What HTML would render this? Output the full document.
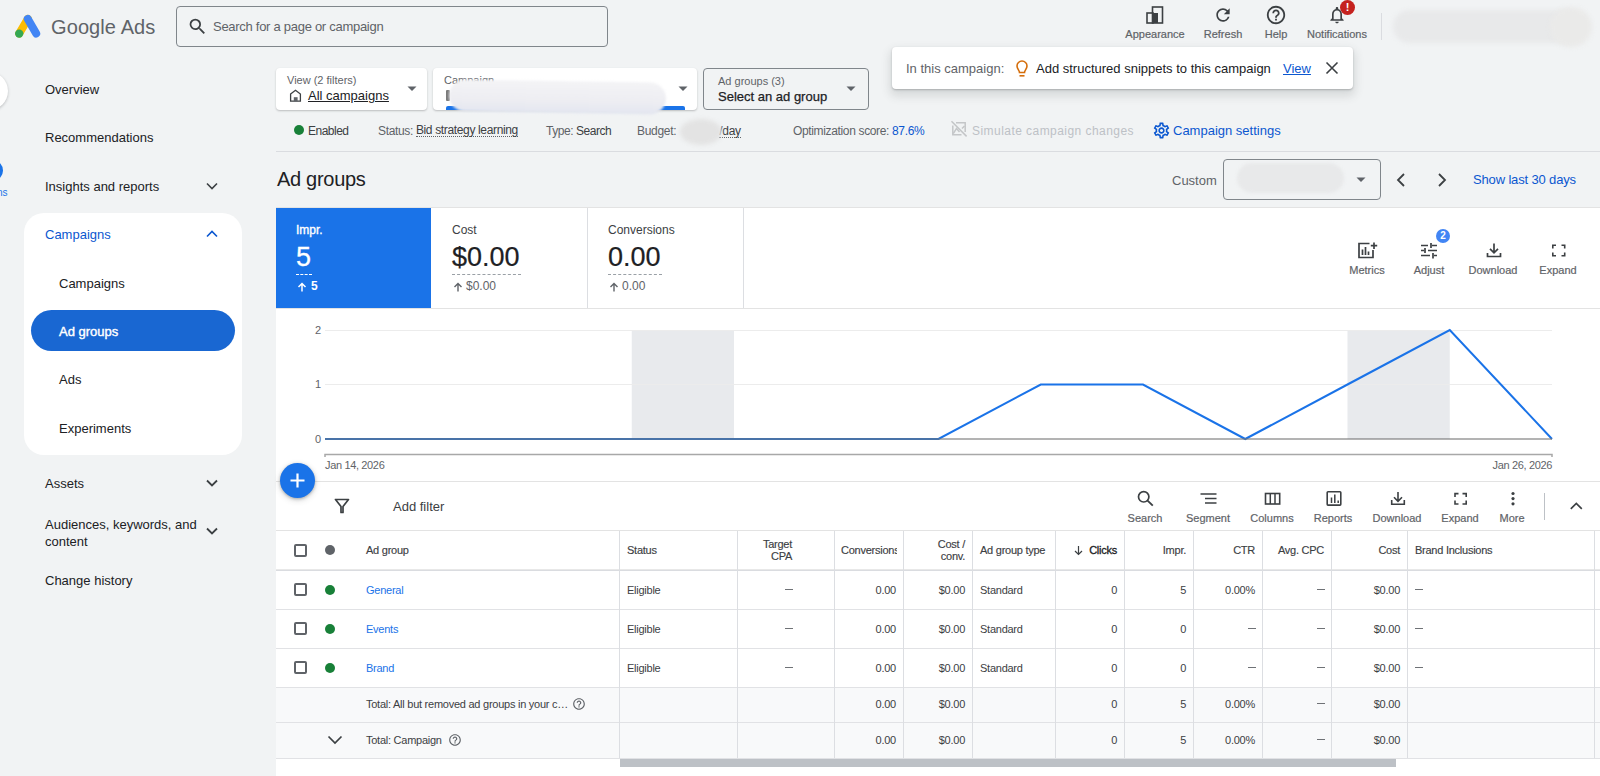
<!DOCTYPE html>
<html><head><meta charset="utf-8">
<style>
*{box-sizing:border-box;margin:0;padding:0}
html,body{width:1600px;height:776px;overflow:hidden;background:#f1f3f4;font-family:"Liberation Sans",sans-serif;color:#202124}
.a{position:absolute;white-space:nowrap}
.ic{position:absolute}
.lbl{position:absolute;font-size:11px;color:#5f6368;text-align:center;width:80px;margin-left:-40px;-webkit-text-stroke:0.2px #5f6368}
.nav{position:absolute;font-size:13px;color:#202124;left:45px}
.sub{left:59px}
.chev{position:absolute}
.hl{position:absolute;height:1px;background:#dadce0}
.vl{position:absolute;width:1px;background:#dcdee2}
</style></head><body>
<!-- Top bar -->
<svg class="ic" style="left:10px;top:10px" width="40" height="32" viewBox="10 10 40 32">
  <path d="M19.2 33.6 L27.8 18.9" stroke="#fbbc04" stroke-width="8" stroke-linecap="round"/>
  <path d="M27.8 18.9 L36.2 33.6" stroke="#4285f4" stroke-width="8" stroke-linecap="round"/>
  <circle cx="19.2" cy="33.6" r="4.2" fill="#34a853"/>
</svg>
<div class="a" style="left:51px;top:16px;font-size:20px;color:#5f6368;letter-spacing:0.1px">Google Ads</div>
<div class="a" style="left:176px;top:6px;width:432px;height:41px;border:1px solid #80868b;border-radius:4px"></div>
<svg class="ic" style="left:187px;top:16px" width="21" height="21" viewBox="0 0 24 24"><path fill="#3c4043" d="M15.5 14h-.79l-.28-.27A6.47 6.47 0 0 0 16 9.5 6.5 6.5 0 1 0 9.5 16c1.61 0 3.09-.59 4.23-1.57l.27.28v.79l5 4.99L20.49 19l-4.99-5zm-6 0C7.01 14 5 11.99 5 9.5S7.01 5 9.5 5 14 7.01 14 9.5 11.99 14 9.5 14z"/></svg>
<div class="a" style="left:213px;top:19px;font-size:13px;color:#5f6368;letter-spacing:-0.28px">Search for a page or campaign</div>


<!-- top right icons -->
<svg class="ic" style="left:1145px;top:5px" width="20" height="20" viewBox="0 0 20 20"><rect x="2" y="8" width="6" height="10" fill="none" stroke="#3c4043" stroke-width="1.6"/><rect x="7.5" y="2" width="10" height="16" fill="none" stroke="#3c4043" stroke-width="1.6"/><rect x="8" y="8" width="5" height="10" fill="#3c4043"/></svg>
<div class="lbl" style="left:1155px;top:28px">Appearance</div>
<svg class="ic" style="left:1213px;top:5px" width="20" height="20" viewBox="0 0 24 24"><path fill="#3c4043" d="M17.65 6.35A7.958 7.958 0 0 0 12 4c-4.42 0-7.99 3.58-7.99 8s3.57 8 7.99 8c3.73 0 6.84-2.55 7.73-6h-2.08A5.99 5.99 0 0 1 12 18c-3.31 0-6-2.69-6-6s2.69-6 6-6c1.66 0 3.14.69 4.22 1.78L13 11h7V4l-2.35 2.35z"/></svg>
<div class="lbl" style="left:1223px;top:28px">Refresh</div>
<svg class="ic" style="left:1265px;top:4px" width="22" height="22" viewBox="0 0 24 24"><path fill="#3c4043" d="M11 18h2v-2h-2v2zm1-16C6.48 2 2 6.48 2 12s4.48 10 10 10 10-4.48 10-10S17.52 2 12 2zm0 18c-4.41 0-8-3.59-8-8s3.59-8 8-8 8 3.59 8 8-3.59 8-8 8zm0-14c-2.21 0-4 1.79-4 4h2c0-1.1.9-2 2-2s2 .9 2 2c0 2-3 1.75-3 5h2c0-2.25 3-2.5 3-5 0-2.21-1.79-4-4-4z"/></svg>
<div class="lbl" style="left:1276px;top:28px">Help</div>
<svg class="ic" style="left:1327px;top:5px" width="20" height="20" viewBox="0 0 24 24"><path fill="#3c4043" d="M12 22c1.1 0 2-.9 2-2h-4c0 1.1.89 2 2 2zm6-6v-5c0-3.07-1.64-5.64-4.5-6.32V4c0-.83-.67-1.5-1.5-1.5s-1.5.67-1.5 1.5v.68C7.63 5.36 6 7.92 6 11v5l-2 2v1h16v-1l-2-2zm-2 1H8v-6c0-2.48 1.51-4.5 4-4.5s4 2.02 4 4.5v6z"/></svg>
<div class="a" style="left:1340px;top:0px;width:15px;height:15px;border-radius:50%;background:#c5221f;color:#fff;font-size:11px;font-weight:bold;text-align:center;line-height:15px">!</div>
<div class="lbl" style="left:1337px;top:28px">Notifications</div>
<div class="a" style="left:1381px;top:13px;width:1px;height:27px;background:#dadce0"></div>
<div class="a" style="left:1393px;top:10px;width:185px;height:33px;border-radius:17px;background:#e8e9ea;filter:blur(2px)"></div><div class="a" style="left:1550px;top:7px;width:42px;height:40px;border-radius:50%;background:#eaeae9;filter:blur(2px)"></div>

<!-- left rail partial -->
<div class="a" style="left:-30px;top:72px;width:38px;height:38px;border-radius:50%;background:#fff;box-shadow:0 1px 3px rgba(60,64,67,.3)"></div>
<div class="a" style="left:-14px;top:161px;width:17px;height:19px;border-radius:50%;background:#1a73e8"></div>
<div class="a" style="left:-3px;top:187px;font-size:10px;color:#1a73e8">ns</div>

<!-- nav -->
<div class="nav a" style="top:82px">Overview</div>
<div class="nav a" style="top:130px">Recommendations</div>
<div class="nav a" style="top:179px">Insights and reports</div>
<svg class="ic" style="left:205px;top:179px" width="14" height="14" viewBox="0 0 14 14"><path d="M2 4.5 L7 9.5 L12 4.5" fill="none" stroke="#3c4043" stroke-width="1.6"/></svg>
<div class="a" style="left:24px;top:213px;width:218px;height:242px;border-radius:20px;background:#fff"></div>
<div class="nav a" style="top:227px;color:#0b57d0">Campaigns</div>
<svg class="ic" style="left:205px;top:227px" width="14" height="14" viewBox="0 0 14 14"><path d="M2 9.5 L7 4.5 L12 9.5" fill="none" stroke="#0b57d0" stroke-width="1.6"/></svg>
<div class="nav sub a" style="top:276px">Campaigns</div>
<div class="a" style="left:31px;top:310px;width:204px;height:41px;border-radius:21px;background:#1967d2"></div>
<div class="nav sub a" style="top:324px;color:#fff;-webkit-text-stroke:0.4px #fff">Ad groups</div>
<div class="nav sub a" style="top:372px">Ads</div>
<div class="nav sub a" style="top:421px">Experiments</div>
<div class="nav a" style="top:476px">Assets</div>
<svg class="ic" style="left:205px;top:476px" width="14" height="14" viewBox="0 0 14 14"><path d="M2 4.5 L7 9.5 L12 4.5" fill="none" stroke="#3c4043" stroke-width="1.8"/></svg>
<div class="nav a" style="top:516px;line-height:17px">Audiences, keywords, and<br>content</div>
<svg class="ic" style="left:205px;top:524px" width="14" height="14" viewBox="0 0 14 14"><path d="M2 4.5 L7 9.5 L12 4.5" fill="none" stroke="#3c4043" stroke-width="1.8"/></svg>
<div class="nav a" style="top:573px">Change history</div>

<!-- dropdowns -->
<div class="a" style="left:276px;top:68px;width:151px;height:42px;border-radius:4px;background:#fff;box-shadow:0 1px 2px rgba(60,64,67,.3)"></div>
<div class="a" style="left:287px;top:74px;font-size:11px;color:#5f6368">View (2 filters)</div>
<svg class="ic" style="left:286px;top:86px" width="18" height="18" viewBox="286 86 18 18"><path d="M290.6 94 L295.5 90.2 L300.4 94 V101.2 H290.6 Z" fill="none" stroke="#3c4043" stroke-width="1.3" stroke-linejoin="miter"/><rect x="293.8" y="97.2" width="3.8" height="4" fill="#5f6368"/></svg>
<div class="a" style="left:308px;top:88px;font-size:13px;color:#202124;text-decoration:underline">All campaigns</div>
<svg class="ic" style="left:407px;top:86px" width="10" height="6" viewBox="0 0 10 6"><path d="M0.5 0.5 H9.5 L5 5 Z" fill="#5f6368"/></svg>

<div class="a" style="left:433px;top:68px;width:264px;height:42px;border-radius:4px;background:#fff;box-shadow:0 1px 2px rgba(60,64,67,.3)"></div>
<div class="a" style="left:444px;top:74px;font-size:11px;color:#5f6368">Campaign</div>
<div class="a" style="left:446px;top:90px;width:4px;height:11px;background:#7a7a7a;border-radius:1px"></div>
<div class="a" style="left:446px;top:106px;width:239px;height:4px;background:#1a73e8;border-radius:2px 2px 0 0"></div>
<div class="a" style="left:449px;top:81px;width:217px;height:32px;border-radius:16px;background:linear-gradient(#f4f4f6,#ededf2 65%,#e3e6f0);filter:blur(1px);transform:rotate(0.9deg)"></div>
<svg class="ic" style="left:678px;top:86px" width="10" height="6" viewBox="0 0 10 6"><path d="M0.5 0.5 H9.5 L5 5 Z" fill="#5f6368"/></svg>

<div class="a" style="left:703px;top:68px;width:166px;height:42px;border-radius:4px;border:1px solid #80868b"></div>
<div class="a" style="left:718px;top:75px;font-size:11px;color:#5f6368">Ad groups (3)</div>
<div class="a" style="left:718px;top:89px;font-size:13px;color:#202124;-webkit-text-stroke:0.25px #202124;letter-spacing:0px">Select an ad group</div>
<svg class="ic" style="left:846px;top:86px" width="10" height="6" viewBox="0 0 10 6"><path d="M0.5 0.5 H9.5 L5 5 Z" fill="#5f6368"/></svg>

<!-- notification popup -->
<div class="a" style="left:892px;top:47px;width:461px;height:42px;border-radius:4px;background:#fff;box-shadow:0 1px 2px rgba(60,64,67,.3),0 5px 10px 2px rgba(60,64,67,.15)"></div>
<div class="a" style="left:906px;top:61px;font-size:13px;color:#5f6368">In this campaign:</div>
<svg class="ic" style="left:1014px;top:59px" width="16" height="20" viewBox="0 0 16 20"><path d="M5.5 13.5 C5.5 11.5 3 10 3 7 A5 5 0 0 1 13 7 C13 10 10.5 11.5 10.5 13.5 Z" fill="none" stroke="#d56e0c" stroke-width="1.6"/><rect x="5.5" y="16" width="5" height="1.6" fill="#d56e0c"/></svg>
<div class="a" style="left:1036px;top:61px;font-size:13px;color:#202124">Add structured snippets to this campaign</div>
<div class="a" style="left:1283px;top:61px;font-size:13px;color:#0b57d0;text-decoration:underline">View</div>
<svg class="ic" style="left:1325px;top:61px" width="14" height="14" viewBox="0 0 14 14"><path d="M1.5 1.5 L12.5 12.5 M12.5 1.5 L1.5 12.5" stroke="#3c4043" stroke-width="1.6"/></svg>

<!-- status row -->
<div class="a" style="left:294px;top:125px;width:10px;height:10px;border-radius:50%;background:#188038"></div>
<div class="a" style="left:308px;top:124px;font-size:12px;color:#3c4043;letter-spacing:-0.5px">Enabled</div>
<div class="a" style="left:378px;top:124px;font-size:12px;color:#5f6368;letter-spacing:-0.35px">Status: <span style="color:#3c4043;display:inline-block;line-height:12px;position:relative;top:-1px;border-bottom:1px dotted #5f6368">Bid strategy learning</span></div>
<div class="a" style="left:546px;top:124px;font-size:12px;color:#5f6368;letter-spacing:-0.45px">Type: <span style="color:#3c4043">Search</span></div>
<div class="a" style="left:637px;top:124px;font-size:12px;color:#5f6368;letter-spacing:-0.3px">Budget: <span style="display:inline-block;width:40px"></span><span style="color:#3c4043;display:inline-block;line-height:12px;position:relative;top:0px;border-bottom:1px dotted #5f6368">/day</span></div>
<div class="a" style="left:680px;top:119px;width:42px;height:26px;border-radius:50%;background:#e3e3e3;filter:blur(2px)"></div>
<div class="a" style="left:793px;top:124px;font-size:12px;color:#5f6368;letter-spacing:-0.35px">Optimization score: <span style="color:#0b57d0">87.6%</span></div>
<svg class="ic" style="left:945px;top:115px" width="27" height="27" viewBox="945 115 27 27"><path d="M956 122.8 H965.2 V132 M952.8 125.5 V134.8 H961.5" fill="none" stroke="#c4c6c8" stroke-width="1.5"/><path d="M951.5 121.3 L966.6 136.4" stroke="#c4c6c8" stroke-width="1.5"/><path d="M953.3 133.5 L956.5 128.5 L959.5 132 M962 128.6 L964.5 126" fill="none" stroke="#c4c6c8" stroke-width="1.4"/></svg>
<div class="a" style="left:972px;top:124px;font-size:12px;color:#bdc1c6;letter-spacing:0.45px">Simulate campaign changes</div>
<svg class="ic" style="left:1152px;top:121px" width="19" height="19" viewBox="0 0 24 24"><path fill="#0b57d0" d="M19.43 12.98c.04-.32.07-.64.07-.98 0-.34-.03-.66-.07-.98l2.11-1.65c.19-.15.24-.42.12-.64l-2-3.46a.5.5 0 0 0-.61-.22l-2.49 1c-.52-.4-1.08-.73-1.69-.98l-.38-2.65A.488.488 0 0 0 14 2h-4c-.25 0-.46.18-.49.42l-.38 2.65c-.61.25-1.17.59-1.69.98l-2.49-1a.566.566 0 0 0-.18-.03c-.17 0-.34.09-.43.25l-2 3.46c-.13.22-.07.49.12.64l2.11 1.65c-.04.32-.07.65-.07.98 0 .33.03.66.07.98l-2.11 1.65c-.19.15-.24.42-.12.64l2 3.46a.5.5 0 0 0 .61.22l2.49-1c.52.4 1.080.73 1.69.98l.38 2.65c.03.24.24.42.49.42h4c.25 0 .46-.18.49-.42l.38-2.65c.61-.25 1.17-.59 1.69-.98l2.49 1c.06.02.12.03.18.03.17 0 .34-.09.43-.25l2-3.46c.12-.22.07-.49-.12-.64l-2.11-1.65zm-1.98-1.71c.04.31.05.52.05.73 0 .21-.02.43-.05.73l-.14 1.13.89.7 1.08.84-.7 1.21-1.27-.51-1.04-.42-.9.68c-.43.32-.84.56-1.25.73l-1.06.43-.16 1.13-.2 1.35h-1.4l-.19-1.35-.16-1.13-1.06-.43c-.43-.18-.83-.41-1.23-.71l-.91-.7-1.06.43-1.27.51-.7-1.21 1.08-.84.89-.7-.14-1.13c-.03-.31-.05-.54-.05-.74s.02-.43.05-.73l.14-1.13-.89-.7-1.08-.84.7-1.21 1.27.51 1.04.42.9-.68c.43-.32.84-.56 1.25-.73l1.06-.43.16-1.130.2-1.35h1.39l.19 1.35.16 1.13 1.06.43c.43.18.83.41 1.23.71l.91.7 1.06-.43 1.27-.51.7 1.21-1.07.85-.89.7.14 1.13zM12 8c-2.21 0-4 1.79-4 4s1.79 4 4 4 4-1.79 4-4-1.79-4-4-4zm0 6c-1.1 0-2-.9-2-2s.9-2 2-2 2 .9 2 2-.9 2-2 2z"/></svg>
<div class="a" style="left:1173px;top:123px;font-size:13px;color:#0b57d0">Campaign settings</div>
<div class="hl" style="left:276px;top:151px;width:1324px"></div>

<!-- title row -->
<div class="a" style="left:277px;top:168px;font-size:20px;color:#202124;letter-spacing:-0.3px">Ad groups</div>
<div class="a" style="left:1172px;top:173px;font-size:13px;color:#5f6368">Custom</div>
<div class="a" style="left:1223px;top:159px;width:158px;height:41px;border-radius:4px;border:1px solid #80868b"></div>
<div class="a" style="left:1237px;top:163px;width:107px;height:30px;border-radius:15px;background:#e8e9ea;filter:blur(1.5px)"></div>
<svg class="ic" style="left:1356px;top:177px" width="10" height="6" viewBox="0 0 10 6"><path d="M0.5 0.5 H9.5 L5 5 Z" fill="#5f6368"/></svg>
<svg class="ic" style="left:1394px;top:172px" width="14" height="16" viewBox="0 0 14 16"><path d="M10 2 L4 8 L10 14" fill="none" stroke="#3c4043" stroke-width="1.8"/></svg>
<svg class="ic" style="left:1435px;top:172px" width="14" height="16" viewBox="0 0 14 16"><path d="M4 2 L10 8 L4 14" fill="none" stroke="#3c4043" stroke-width="1.8"/></svg>
<div class="a" style="left:1473px;top:172px;font-size:13px;color:#0b57d0;letter-spacing:-0.15px">Show last 30 days</div>

<!-- scorecards panel -->
<div class="a" style="left:276px;top:207px;width:1324px;height:569px;background:#fff"></div>
<div class="hl" style="left:276px;top:207px;width:1324px;background:#e3e3e3"></div>
<div class="a" style="left:276px;top:208px;width:155px;height:100px;background:#1a73e8"></div>
<div class="vl" style="left:587px;top:208px;height:100px"></div>
<div class="vl" style="left:743px;top:208px;height:100px"></div>
<div class="hl" style="left:276px;top:308px;width:1324px;background:#e3e3e3"></div>
<div class="a" style="left:296px;top:223px;font-size:12px;color:#fff;-webkit-text-stroke:0.35px #fff">Impr.</div>
<div class="a" style="left:296px;top:242px;font-size:27px;color:#fff;-webkit-text-stroke:0.3px #fff">5</div>
<div class="a" style="left:296px;top:274px;width:16px;border-top:1px dashed #fff"></div>
<svg class="ic" style="left:297px;top:282px" width="10" height="10" viewBox="0 0 10 10"><path d="M5 9.5 V1.5 M1.5 5 L5 1.5 L8.5 5" fill="none" stroke="#fff" stroke-width="1.5"/></svg>
<div class="a" style="left:311px;top:279px;font-size:12px;color:#fff;font-weight:bold">5</div>

<div class="a" style="left:452px;top:223px;font-size:12px;color:#3c4043">Cost</div>
<div class="a" style="left:452px;top:242px;font-size:27px;color:#202124;-webkit-text-stroke:0.2px #202124">$0.00</div>
<div class="a" style="left:452px;top:274px;width:69px;border-top:1px dashed #9aa0a6"></div>
<svg class="ic" style="left:453px;top:282px" width="10" height="10" viewBox="0 0 10 10"><path d="M5 9.5 V1.5 M1.5 5 L5 1.5 L8.5 5" fill="none" stroke="#5f6368" stroke-width="1.4"/></svg>
<div class="a" style="left:466px;top:279px;font-size:12px;color:#5f6368">$0.00</div>

<div class="a" style="left:608px;top:223px;font-size:12px;color:#3c4043">Conversions</div>
<div class="a" style="left:608px;top:242px;font-size:27px;color:#202124;-webkit-text-stroke:0.2px #202124">0.00</div>
<div class="a" style="left:608px;top:274px;width:54px;border-top:1px dashed #9aa0a6"></div>
<svg class="ic" style="left:609px;top:282px" width="10" height="10" viewBox="0 0 10 10"><path d="M5 9.5 V1.5 M1.5 5 L5 1.5 L8.5 5" fill="none" stroke="#5f6368" stroke-width="1.4"/></svg>
<div class="a" style="left:622px;top:279px;font-size:12px;color:#5f6368">0.00</div>

<!-- chart tools -->
<svg class="ic" style="left:1357px;top:242px" width="21" height="17" viewBox="0 0 21 17"><path d="M12.5 1.5 H2 V15.5 H16 V8" fill="none" stroke="#3c4043" stroke-width="1.7"/><path d="M5.5 13 V7.5 M8.5 13 V5 M11.5 13 V9.5" stroke="#3c4043" stroke-width="1.7"/><path d="M17 0.5 V7 M13.8 3.7 H20.2" stroke="#3c4043" stroke-width="1.7"/></svg>
<div class="lbl" style="left:1367px;top:264px">Metrics</div>
<svg class="ic" style="left:1420px;top:242px" width="18" height="17" viewBox="0 0 18 17"><path d="M1 3.5 H8 M12 3.5 H17 M1 8.5 H4 M8 8.5 H17 M1 13.5 H10 M14 13.5 H17" stroke="#3c4043" stroke-width="1.7"/><path d="M11 1 V6 M5 6 V11 M13 11 V16.5" stroke="#3c4043" stroke-width="1.7"/></svg>
<div class="a" style="left:1436px;top:229px;width:14px;height:14px;border-radius:50%;background:#4285f4;color:#fff;font-size:10px;font-weight:bold;text-align:center;line-height:14px">2</div>
<div class="lbl" style="left:1429px;top:264px">Adjust</div>
<svg class="ic" style="left:1486px;top:243px" width="16" height="15" viewBox="0 0 16 15"><path d="M8 0.5 V9.5 M4 5.8 L8 9.8 L12 5.8" fill="none" stroke="#3c4043" stroke-width="1.7"/><path d="M1.5 10 V13.5 H14.5 V10" fill="none" stroke="#3c4043" stroke-width="1.7"/></svg>
<div class="lbl" style="left:1493px;top:264px">Download</div>
<svg class="ic" style="left:1548px;top:240px" width="22" height="20" viewBox="1548 240 22 20"><path d="M1552.8 248.5 V245.3 H1556 M1561.5 245.3 H1564.7 V248.5 M1564.7 252.5 V255.7 H1561.5 M1556 255.7 H1552.8 V252.5" fill="none" stroke="#3c4043" stroke-width="1.6"/></svg>
<div class="lbl" style="left:1558px;top:264px">Expand</div>

<!-- chart -->
<svg class="ic" style="left:0;top:0" width="1600" height="776" viewBox="0 0 1600 776">
  <rect x="631.75" y="330" width="102.25" height="109" fill="#e8eaed"/>
  <rect x="1347.5" y="330" width="102.25" height="109" fill="#e8eaed"/>
  <path d="M325 330.5 H1552 M325 384.5 H1552" stroke="#ececec" stroke-width="1"/>
  
  <path d="M325 457 V454.5 H1552 V457" fill="none" stroke="#a8a8a8" stroke-width="1.5"/>
  <polyline points="325.00,439 427.25,439 529.50,439 631.75,439 734.00,439 836.25,439 938.50,439 1040.75,384.5 1143.00,384.5 1245.25,439 1347.50,384.5 1449.75,330 1552.00,439" fill="none" stroke="#1a73e8" stroke-width="2" stroke-linejoin="miter"/>
  <path d="M325 439 H1552" stroke="rgba(114,114,114,0.54)" stroke-width="2"/>
</svg>
<div class="a" style="left:300px;top:324px;width:21px;text-align:right;font-size:11px;color:#5f6368">2</div>
<div class="a" style="left:300px;top:378px;width:21px;text-align:right;font-size:11px;color:#5f6368">1</div>
<div class="a" style="left:300px;top:433px;width:21px;text-align:right;font-size:11px;color:#5f6368">0</div>
<div class="a" style="left:325px;top:459px;font-size:11px;color:#5f6368;letter-spacing:-0.35px">Jan 14, 2026</div>
<div class="a" style="left:1452px;top:459px;width:100px;text-align:right;font-size:11px;color:#5f6368;letter-spacing:-0.35px">Jan 26, 2026</div>
<div class="hl" style="left:276px;top:481px;width:1324px;background:#e3e3e3"></div>

<!-- filter row -->
<svg class="ic" style="left:334px;top:498px" width="16" height="16" viewBox="0 0 16 16"><path d="M1.5 1.5 H14.5 L9 8.5 V14.5 H7 V8.5 Z" fill="none" stroke="#3c4043" stroke-width="1.7" stroke-linejoin="round"/></svg>
<div class="a" style="left:393px;top:499px;font-size:13px;color:#3c4043">Add filter</div>

<!-- FAB -->
<div class="a" style="left:280px;top:463px;width:35px;height:35px;border-radius:50%;background:#1a73e8;box-shadow:0 1px 3px rgba(60,64,67,.35),0 2px 6px rgba(60,64,67,.2)"></div>
<svg class="ic" style="left:288px;top:471px" width="19" height="19" viewBox="0 0 19 19"><path d="M9.5 2.5 V16.5 M2.5 9.5 H16.5" stroke="#fff" stroke-width="2.2"/></svg>

<!-- table toolbar -->
<svg class="ic" style="left:1130px;top:484px" width="30" height="26" viewBox="1130 484 30 26"><circle cx="1143.7" cy="496.8" r="5.2" fill="none" stroke="#3c4043" stroke-width="1.7"/><path d="M1147.3 500.4 L1152.8 505.6" stroke="#3c4043" stroke-width="1.9"/></svg>
<svg class="ic" style="left:1195px;top:484px" width="30" height="26" viewBox="1195 484 30 26"><path d="M1200.5 494 H1216.5 M1205 498.5 H1216.5 M1205 503 H1216.5" stroke="#3c4043" stroke-width="1.6"/></svg>
<svg class="ic" style="left:1260px;top:484px" width="30" height="26" viewBox="1260 484 30 26"><rect x="1265.5" y="493.5" width="14.2" height="10.5" fill="none" stroke="#3c4043" stroke-width="1.6"/><path d="M1270.3 493.5 V504 M1275 493.5 V504" stroke="#3c4043" stroke-width="1.5"/></svg>
<svg class="ic" style="left:1320px;top:484px" width="30" height="26" viewBox="1320 484 30 26"><rect x="1327.2" y="491.7" width="13.6" height="13.4" rx="0.8" fill="none" stroke="#3c4043" stroke-width="1.6"/><path d="M1331.5 503 V497.5 M1334.8 503 V494.5 M1338.2 503 V500.5" stroke="#3c4043" stroke-width="1.5"/></svg>
<svg class="ic" style="left:1385px;top:484px" width="30" height="26" viewBox="1385 484 30 26"><path d="M1398 492 V501 M1394 497.3 L1398 501.3 L1402 497.3" fill="none" stroke="#3c4043" stroke-width="1.6"/><path d="M1391.7 500 V504.2 H1404.3 V500" fill="none" stroke="#3c4043" stroke-width="1.6"/></svg>
<svg class="ic" style="left:1450px;top:484px" width="30" height="26" viewBox="1450 484 30 26"><path d="M1455 497 V493.6 H1458.5 M1462.5 493.6 H1466.2 V497 M1466.2 500.5 V504 H1462.5 M1458.5 504 H1455 V500.5" fill="none" stroke="#3c4043" stroke-width="1.6"/></svg>
<svg class="ic" style="left:1505px;top:484px" width="16" height="26" viewBox="1505 484 16 26"><circle cx="1513" cy="493.5" r="1.6" fill="#3c4043"/><circle cx="1513" cy="498.6" r="1.6" fill="#3c4043"/><circle cx="1513" cy="503.8" r="1.6" fill="#3c4043"/></svg>
<div class="lbl" style="left:1145px;top:512px">Search</div>
<div class="lbl" style="left:1208px;top:512px">Segment</div>
<div class="lbl" style="left:1272px;top:512px">Columns</div>
<div class="lbl" style="left:1333px;top:512px">Reports</div>
<div class="lbl" style="left:1397px;top:512px">Download</div>
<div class="lbl" style="left:1460px;top:512px">Expand</div>
<div class="lbl" style="left:1512px;top:512px">More</div>

<div class="a" style="left:1544px;top:493px;width:1px;height:27px;background:#bdc1c6"></div>
<svg class="ic" style="left:1565px;top:498px" width="22" height="16" viewBox="1565 498 22 16"><path d="M1570.8 508.8 L1576.3 503.5 L1581.8 508.8" fill="none" stroke="#3c4043" stroke-width="1.7"/></svg>
<div class="hl" style="left:276px;top:530px;width:1324px;background:#e3e3e3"></div>

<!-- table -->
<div class="a" style="left:276px;top:688px;width:1324px;height:70px;background:#f8f9fa"></div>
<div class="hl" style="left:276px;top:570px;width:1324px;background:#dadce0"></div>
<div class="hl" style="left:276px;top:609px;width:1324px;background:#e1e2e5"></div>
<div class="hl" style="left:276px;top:648px;width:1324px;background:#e1e2e5"></div>
<div class="hl" style="left:276px;top:687px;width:1324px;background:#e1e2e5"></div>
<div class="hl" style="left:276px;top:722px;width:1324px;background:#e1e2e5"></div>
<div class="hl" style="left:276px;top:758px;width:1324px;background:#e1e2e5"></div>
<div class="hl" style="left:276px;top:569px;width:1324px;background:#e8e8e8"></div>
<div class="vl" style="left:619px;top:531px;height:227px"></div>
<div class="vl" style="left:737px;top:531px;height:227px"></div>
<div class="vl" style="left:834px;top:531px;height:227px"></div>
<div class="vl" style="left:903px;top:531px;height:227px"></div>
<div class="vl" style="left:972px;top:531px;height:227px"></div>
<div class="vl" style="left:1055px;top:531px;height:227px"></div>
<div class="vl" style="left:1124px;top:531px;height:227px"></div>
<div class="vl" style="left:1193px;top:531px;height:227px"></div>
<div class="vl" style="left:1262px;top:531px;height:227px"></div>
<div class="vl" style="left:1331px;top:531px;height:227px"></div>
<div class="vl" style="left:1407px;top:531px;height:227px"></div>
<div class="vl" style="left:1594px;top:531px;height:227px"></div>
<div class="a" style="left:294px;top:544px;width:13px;height:13px;border:2px solid #5f6368;border-radius:2px"></div>
<div class="a" style="left:325px;top:545px;width:10px;height:10px;border-radius:50%;background:#5f6368"></div>
<div class="a" style="left:366px;top:544px;font-size:11px;color:#3c4043;letter-spacing:-0.25px;-webkit-text-stroke:0.15px #3c4043">Ad group</div>
<div class="a" style="left:627px;top:544px;font-size:11px;color:#3c4043;letter-spacing:-0.25px;-webkit-text-stroke:0.15px #3c4043">Status</div>
<div class="a" style="left:672px;top:538px;width:120px;text-align:right;font-size:11px;color:#3c4043;letter-spacing:-0.25px;line-height:12px;-webkit-text-stroke:0.15px #3c4043">Target<br>CPA</div>
<div class="a" style="left:841px;top:544px;width:56px;overflow:hidden;font-size:11px;color:#3c4043;letter-spacing:-0.25px;-webkit-text-stroke:0.15px #3c4043">Conversions</div>
<div class="a" style="left:845px;top:538px;width:120px;text-align:right;font-size:11px;color:#3c4043;letter-spacing:-0.25px;line-height:12px;-webkit-text-stroke:0.15px #3c4043">Cost /<br>conv.</div>
<div class="a" style="left:980px;top:544px;font-size:11px;color:#3c4043;letter-spacing:-0.25px;-webkit-text-stroke:0.15px #3c4043">Ad group type</div>
<svg class="ic" style="left:1073px;top:545px" width="11" height="11" viewBox="0 0 11 11"><path d="M5.5 1 V9.5 M2 6 L5.5 9.5 L9 6" fill="none" stroke="#3c4043" stroke-width="1.2"/></svg>
<div class="a" style="left:997px;top:544px;width:120px;text-align:right;font-size:11px;color:#3c4043;letter-spacing:-0.25px;-webkit-text-stroke:0.3px #202124;color:#202124">Clicks</div>
<div class="a" style="left:1066px;top:544px;width:120px;text-align:right;font-size:11px;color:#3c4043;letter-spacing:-0.25px;-webkit-text-stroke:0.15px #3c4043">Impr.</div>
<div class="a" style="left:1135px;top:544px;width:120px;text-align:right;font-size:11px;color:#3c4043;letter-spacing:-0.25px;-webkit-text-stroke:0.15px #3c4043">CTR</div>
<div class="a" style="left:1204px;top:544px;width:120px;text-align:right;font-size:11px;color:#3c4043;letter-spacing:-0.25px;-webkit-text-stroke:0.15px #3c4043">Avg. CPC</div>
<div class="a" style="left:1280px;top:544px;width:120px;text-align:right;font-size:11px;color:#3c4043;letter-spacing:-0.25px;-webkit-text-stroke:0.15px #3c4043">Cost</div>
<div class="a" style="left:1415px;top:544px;font-size:11px;color:#3c4043;letter-spacing:-0.25px;-webkit-text-stroke:0.15px #3c4043">Brand Inclusions</div>
<div class="a" style="left:294px;top:583px;width:13px;height:13px;border:2px solid #5f6368;border-radius:2px"></div>
<div class="a" style="left:325px;top:585px;width:10px;height:10px;border-radius:50%;background:#188038"></div>
<div class="a" style="left:366px;top:584px;font-size:11px;color:#3c4043;letter-spacing:-0.25px;color:#1a73e8">General</div>
<div class="a" style="left:627px;top:584px;font-size:11px;color:#3c4043;letter-spacing:-0.25px;">Eligible</div>
<div class="a" style="left:784.5px;top:589px;width:8px;height:1px;background:#6f7276"></div>
<div class="a" style="left:776px;top:584px;width:120px;text-align:right;font-size:11px;color:#3c4043;letter-spacing:-0.25px;">0.00</div>
<div class="a" style="left:845px;top:584px;width:120px;text-align:right;font-size:11px;color:#3c4043;letter-spacing:-0.25px;">$0.00</div>
<div class="a" style="left:980px;top:584px;font-size:11px;color:#3c4043;letter-spacing:-0.25px;">Standard</div>
<div class="a" style="left:997px;top:584px;width:120px;text-align:right;font-size:11px;color:#3c4043;letter-spacing:-0.25px;">0</div>
<div class="a" style="left:1066px;top:584px;width:120px;text-align:right;font-size:11px;color:#3c4043;letter-spacing:-0.25px;">5</div>
<div class="a" style="left:1135px;top:584px;width:120px;text-align:right;font-size:11px;color:#3c4043;letter-spacing:-0.25px;">0.00%</div>
<div class="a" style="left:1316.5px;top:589px;width:8px;height:1px;background:#6f7276"></div>
<div class="a" style="left:1280px;top:584px;width:120px;text-align:right;font-size:11px;color:#3c4043;letter-spacing:-0.25px;">$0.00</div>
<div class="a" style="left:1415px;top:589px;width:8px;height:1px;background:#6f7276"></div>
<div class="a" style="left:294px;top:622px;width:13px;height:13px;border:2px solid #5f6368;border-radius:2px"></div>
<div class="a" style="left:325px;top:624px;width:10px;height:10px;border-radius:50%;background:#188038"></div>
<div class="a" style="left:366px;top:623px;font-size:11px;color:#3c4043;letter-spacing:-0.25px;color:#1a73e8">Events</div>
<div class="a" style="left:627px;top:623px;font-size:11px;color:#3c4043;letter-spacing:-0.25px;">Eligible</div>
<div class="a" style="left:784.5px;top:628px;width:8px;height:1px;background:#6f7276"></div>
<div class="a" style="left:776px;top:623px;width:120px;text-align:right;font-size:11px;color:#3c4043;letter-spacing:-0.25px;">0.00</div>
<div class="a" style="left:845px;top:623px;width:120px;text-align:right;font-size:11px;color:#3c4043;letter-spacing:-0.25px;">$0.00</div>
<div class="a" style="left:980px;top:623px;font-size:11px;color:#3c4043;letter-spacing:-0.25px;">Standard</div>
<div class="a" style="left:997px;top:623px;width:120px;text-align:right;font-size:11px;color:#3c4043;letter-spacing:-0.25px;">0</div>
<div class="a" style="left:1066px;top:623px;width:120px;text-align:right;font-size:11px;color:#3c4043;letter-spacing:-0.25px;">0</div>
<div class="a" style="left:1247.5px;top:628px;width:8px;height:1px;background:#6f7276"></div>
<div class="a" style="left:1316.5px;top:628px;width:8px;height:1px;background:#6f7276"></div>
<div class="a" style="left:1280px;top:623px;width:120px;text-align:right;font-size:11px;color:#3c4043;letter-spacing:-0.25px;">$0.00</div>
<div class="a" style="left:1415px;top:628px;width:8px;height:1px;background:#6f7276"></div>
<div class="a" style="left:294px;top:661px;width:13px;height:13px;border:2px solid #5f6368;border-radius:2px"></div>
<div class="a" style="left:325px;top:663px;width:10px;height:10px;border-radius:50%;background:#188038"></div>
<div class="a" style="left:366px;top:662px;font-size:11px;color:#3c4043;letter-spacing:-0.25px;color:#1a73e8">Brand</div>
<div class="a" style="left:627px;top:662px;font-size:11px;color:#3c4043;letter-spacing:-0.25px;">Eligible</div>
<div class="a" style="left:784.5px;top:667px;width:8px;height:1px;background:#6f7276"></div>
<div class="a" style="left:776px;top:662px;width:120px;text-align:right;font-size:11px;color:#3c4043;letter-spacing:-0.25px;">0.00</div>
<div class="a" style="left:845px;top:662px;width:120px;text-align:right;font-size:11px;color:#3c4043;letter-spacing:-0.25px;">$0.00</div>
<div class="a" style="left:980px;top:662px;font-size:11px;color:#3c4043;letter-spacing:-0.25px;">Standard</div>
<div class="a" style="left:997px;top:662px;width:120px;text-align:right;font-size:11px;color:#3c4043;letter-spacing:-0.25px;">0</div>
<div class="a" style="left:1066px;top:662px;width:120px;text-align:right;font-size:11px;color:#3c4043;letter-spacing:-0.25px;">0</div>
<div class="a" style="left:1247.5px;top:667px;width:8px;height:1px;background:#6f7276"></div>
<div class="a" style="left:1316.5px;top:667px;width:8px;height:1px;background:#6f7276"></div>
<div class="a" style="left:1280px;top:662px;width:120px;text-align:right;font-size:11px;color:#3c4043;letter-spacing:-0.25px;">$0.00</div>
<div class="a" style="left:1415px;top:667px;width:8px;height:1px;background:#6f7276"></div>
<div class="a" style="left:366px;top:698px;font-size:11px;color:#3c4043;letter-spacing:-0.25px;">Total: All but removed ad groups in your c…</div>
<svg class="ic" style="left:572px;top:697px" width="14" height="14" viewBox="0 0 24 24"><path fill="#5f6368" d="M11 18h2v-2h-2v2zm1-16C6.48 2 2 6.48 2 12s4.480 10 10 10 10-4.48 10-10S17.52 2 12 2zm0 18c-4.41 0-8-3.590-8-8s3.59-8 8-8 8 3.59 8 8-3.59 8-8 8zm0-14c-2.21 0-4 1.79-4 4h2c0-1.1.9-2 2-2s2 .9 2 2c0 2-3 1.75-3 5h2c0-2.25 3-2.5 3-5 0-2.21-1.79-4-4-4z"/></svg>
<div class="a" style="left:776px;top:698px;width:120px;text-align:right;font-size:11px;color:#3c4043;letter-spacing:-0.25px;">0.00</div>
<div class="a" style="left:845px;top:698px;width:120px;text-align:right;font-size:11px;color:#3c4043;letter-spacing:-0.25px;">$0.00</div>
<div class="a" style="left:997px;top:698px;width:120px;text-align:right;font-size:11px;color:#3c4043;letter-spacing:-0.25px;">0</div>
<div class="a" style="left:1066px;top:698px;width:120px;text-align:right;font-size:11px;color:#3c4043;letter-spacing:-0.25px;">5</div>
<div class="a" style="left:1135px;top:698px;width:120px;text-align:right;font-size:11px;color:#3c4043;letter-spacing:-0.25px;">0.00%</div>
<div class="a" style="left:1316.5px;top:703px;width:8px;height:1px;background:#6f7276"></div>
<div class="a" style="left:1280px;top:698px;width:120px;text-align:right;font-size:11px;color:#3c4043;letter-spacing:-0.25px;">$0.00</div>
<div class="a" style="left:366px;top:734px;font-size:11px;color:#3c4043;letter-spacing:-0.25px;">Total: Campaign</div>
<svg class="ic" style="left:448px;top:733px" width="14" height="14" viewBox="0 0 24 24"><path fill="#5f6368" d="M11 18h2v-2h-2v2zm1-16C6.48 2 2 6.48 2 12s4.480 10 10 10 10-4.48 10-10S17.52 2 12 2zm0 18c-4.41 0-8-3.590-8-8s3.59-8 8-8 8 3.59 8 8-3.59 8-8 8zm0-14c-2.21 0-4 1.79-4 4h2c0-1.1.9-2 2-2s2 .9 2 2c0 2-3 1.75-3 5h2c0-2.25 3-2.5 3-5 0-2.21-1.79-4-4-4z"/></svg>
<svg class="ic" style="left:327px;top:735px" width="16" height="10" viewBox="0 0 16 10"><path d="M1.5 1.5 L8 8 L14.5 1.5" fill="none" stroke="#3c4043" stroke-width="1.7"/></svg>
<div class="a" style="left:776px;top:734px;width:120px;text-align:right;font-size:11px;color:#3c4043;letter-spacing:-0.25px;">0.00</div>
<div class="a" style="left:845px;top:734px;width:120px;text-align:right;font-size:11px;color:#3c4043;letter-spacing:-0.25px;">$0.00</div>
<div class="a" style="left:997px;top:734px;width:120px;text-align:right;font-size:11px;color:#3c4043;letter-spacing:-0.25px;">0</div>
<div class="a" style="left:1066px;top:734px;width:120px;text-align:right;font-size:11px;color:#3c4043;letter-spacing:-0.25px;">5</div>
<div class="a" style="left:1135px;top:734px;width:120px;text-align:right;font-size:11px;color:#3c4043;letter-spacing:-0.25px;">0.00%</div>
<div class="a" style="left:1316.5px;top:739px;width:8px;height:1px;background:#6f7276"></div>
<div class="a" style="left:1280px;top:734px;width:120px;text-align:right;font-size:11px;color:#3c4043;letter-spacing:-0.25px;">$0.00</div>
<div class="a" style="left:620px;top:759px;width:776px;height:8px;background:#bdc1c6"></div>
</body></html>
